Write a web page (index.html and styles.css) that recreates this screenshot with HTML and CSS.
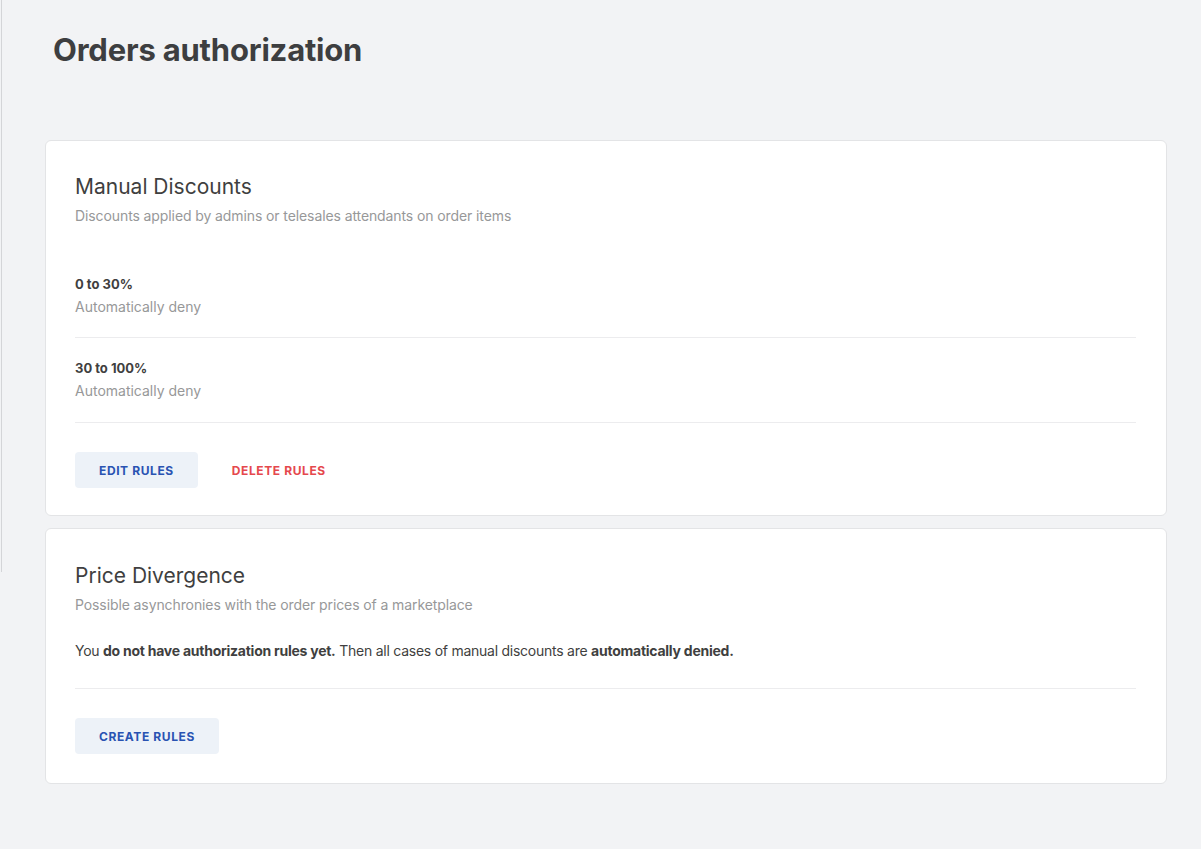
FILE: index.html
```html
<!DOCTYPE html>
<html lang="en">
<head>
<meta charset="utf-8">
<title>Orders authorization</title>
<link rel="stylesheet" href="styles.css">
</head>
<body>
<main class="page">
  <h1 class="page-title">Orders authorization</h1>

  <section class="card">
    <header class="card-header">
      <h2 class="card-title">Manual Discounts</h2>
      <p class="card-subtitle">Discounts applied by admins or telesales attendants on order items</p>
    </header>
    <ul class="rules">
      <li class="rule">
        <div class="rule-label">0 to 30%</div>
        <div class="rule-desc">Automatically deny</div>
      </li>
      <li class="rule">
        <div class="rule-label">30 to 100%</div>
        <div class="rule-desc">Automatically deny</div>
      </li>
    </ul>
    <div class="actions">
      <button class="btn btn-secondary">Edit rules</button>
      <button class="btn btn-danger">Delete rules</button>
    </div>
  </section>

  <section class="card card-empty">
    <header class="card-header card-header-tight">
      <h2 class="card-title">Price Divergence</h2>
      <p class="card-subtitle">Possible asynchronies with the order prices of a marketplace</p>
    </header>
    <p class="empty-text">You <strong>do not have authorization rules yet.</strong> Then all cases of manual discounts are <strong>automatically denied.</strong></p>
    <div class="actions">
      <button class="btn btn-secondary">Create rules</button>
    </div>
  </section>
</main>
</body>
</html>
```

FILE: styles.css
```css
html, body {
  margin: 0;
  padding: 0;
}

body {
  background:
    linear-gradient(#d4d5d8, #d4d5d8) 1px 0 / 1px 572px no-repeat,
    #f2f3f5;
  font-family: "Inter", "Liberation Sans", sans-serif;
  color: #3f3f40;
  min-height: 849px;
}

.page {
  padding: 0 34px 0 45px;
  display: flex;
  flex-direction: column;
  gap: 12px;
}

.page-title {
  margin: 30px 0 58px 8px;
  font-size: 31px;
  line-height: 40px;
  font-weight: 700;
  color: #3d3e40;
  letter-spacing: -0.2px;
}

.card {
  background: #fff;
  border: 1px solid #e3e4e6;
  border-radius: 6px;
  padding: 32px 30px 27px 29px;
}

.card-empty {
  padding-top: 33px;
  padding-bottom: 29px;
}

.card-header {
  margin-bottom: 28px;
}

.card-header-tight {
  margin-bottom: 26px;
}

.card-title {
  margin: 0;
  font-size: 21px;
  line-height: 28px;
  font-weight: 400;
  color: #3f3f40;
}

.card-subtitle {
  margin: 5px 0 0;
  font-size: 14px;
  line-height: 20px;
  color: #979899;
  letter-spacing: -0.1px;
}

.rules {
  list-style: none;
  margin: 0;
  padding: 0;
}

.rule {
  padding: 20px 0 21px;
  border-bottom: 1px solid #ececee;
}

.rule:first-child {
  padding-bottom: 20px;
}

.rule-label {
  font-size: 13px;
  line-height: 20px;
  font-weight: 700;
  color: #3f3f40;
}

.rule-desc {
  margin-top: 3px;
  font-size: 14px;
  line-height: 20px;
  color: #979899;
}

.empty-text {
  margin: 0;
  font-size: 14px;
  line-height: 20px;
  color: #3f3f40;
  letter-spacing: -0.25px;
  padding-bottom: 27px;
  border-bottom: 1px solid #ececee;
}

.empty-text strong {
  font-weight: 700;
}

.actions {
  display: flex;
  gap: 10px;
  padding-top: 29px;
}

.btn {
  height: 36px;
  padding: 0 24px;
  border: 0;
  border-radius: 4px;
  background: transparent;
  font-family: inherit;
  font-size: 12px;
  font-weight: 700;
  letter-spacing: 0.6px;
  text-transform: uppercase;
  cursor: pointer;
}

.btn-secondary {
  background: #edf2f8;
  color: #2953b2;
}

.btn-danger {
  color: #e5484d;
}
```
